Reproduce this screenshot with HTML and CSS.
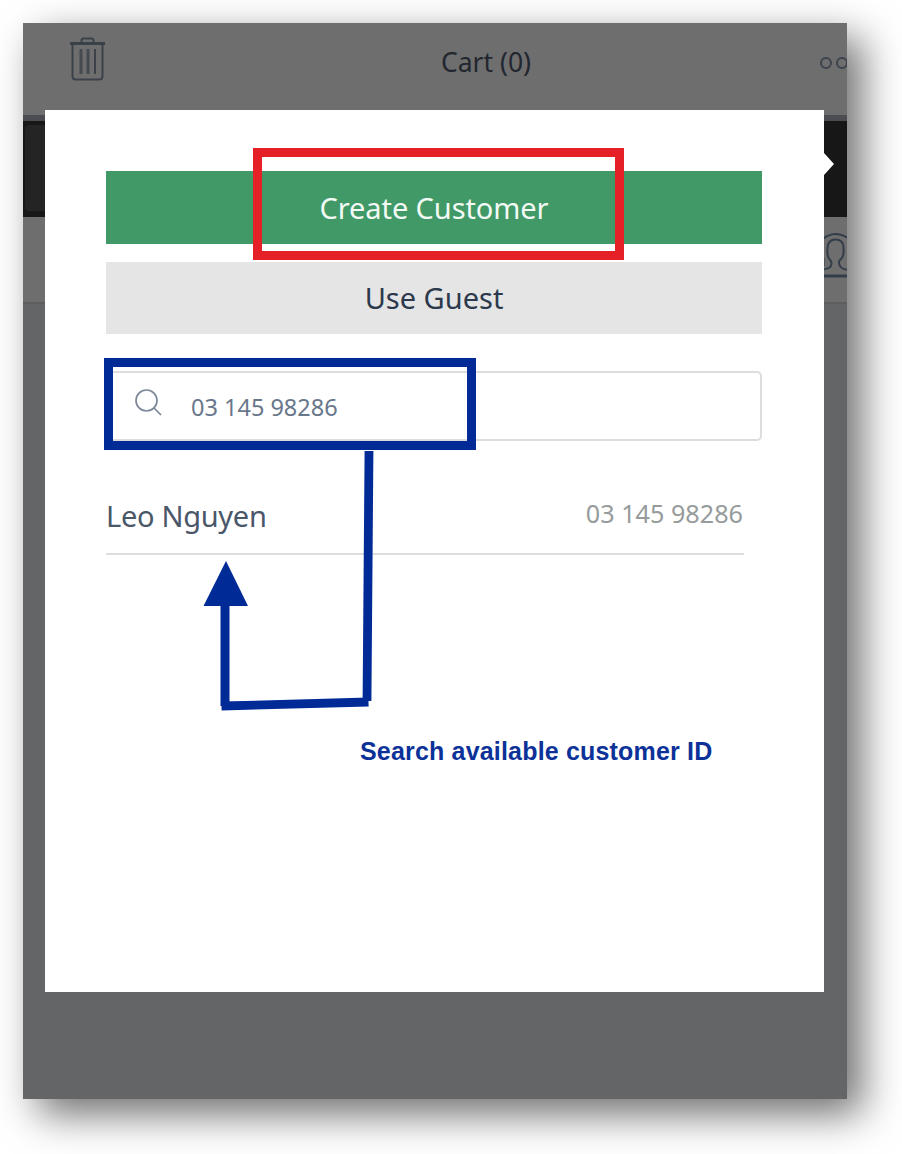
FILE: index.html
```html
<!DOCTYPE html>
<html lang="en">
<head>
<meta charset="utf-8">
<title>Cart</title>
<link rel="stylesheet" href="styles.css">
</head>
<body>
<main class="screen">
  <header class="topbar">
    <svg class="trash" width="38" height="46" viewBox="0 0 38 46" fill="none" stroke="#3b4149" stroke-width="2">
      <path d="M1 7.500H36" stroke-width="3"/>
      <path d="M3.500 8V40Q3.500 43.500 6.500 43.500H30Q33.500 43.500 33.500 40V8M12.500 7V4.500Q12.500 2.500 14.500 2.500H22.500Q24.500 2.500 24.500 4.500V7"/>
      <path d="M12 13V38M19 13V38" stroke-width="3" opacity=".8"/><path d="M26 13V38"/>
    </svg>
    <h1 class="title">Cart (0)</h1>
    <span class="more"><i class="dot"></i><i class="dot"></i></span>
  </header>
  <div class="band"><div class="band-button"></div></div>
  <div class="account">
    <svg width="25" height="50" viewBox="0 0 25 50" fill="none" stroke="#343d4a" stroke-width="2">
      <path d="M0 6.500Q14-4.500 28 6.500M0 36.500Q9 36 9.500 31Q9.500 28 7 25.500Q5 23 5.500 15Q6 6.500 13.500 6.500Q21.500 6.500 21.500 15Q22 23 19.500 25.500Q17 27 17 30Q17.500 36 26 37M1.500 25V33"/>
      <path d="M0 43H25" stroke-width="3"/>
    </svg>
  </div>

  <section class="dialog">
    <button class="btn create"><span class="label-create">Create Customer</span></button>
    <button class="btn guest"><span class="label-guest">Use Guest</span></button>
    <div class="search">
      <svg width="30" height="30" viewBox="0 0 30 30" fill="none" stroke="#7b8798" stroke-width="1.700">
        <circle cx="12.500" cy="12.500" r="10.500"/><path d="M20 20L27 27"/>
      </svg>
      <span class="query">03 145 98286</span>
    </div>
    <div class="result">
      <span class="name">Leo Nguyen</span>
      <span class="phone">03 145 98286</span>
    </div>
    <p class="note">Search available customer ID</p>
    <i class="pointer"></i>
    <i class="mark mark-create"></i>
    <i class="mark mark-search"></i>
    <svg class="arrow" width="180" height="270" viewBox="0 0 180 270">
      <path d="M171 3L169 253" stroke="#002b96" stroke-width="8.800"/>
      <path d="M23.500 258L170.500 254" stroke="#002b96" stroke-width="8.800"/>
      <path d="M27 258V150" stroke="#002b96" stroke-width="9"/>
      <path d="M28 113L50 158H5.500Z" fill="#002b96"/>
    </svg>
  </section>
</main>
</body>
</html>
```
FILE: styles.css
```css
* { box-sizing: border-box; }
body {
  margin: 0;
  padding: 23px;
  width: 902px;
  height: 1154px;
  overflow: hidden;
  background: #fff;
  font-family: "Noto Sans", sans-serif;
}
.screen {
  position: relative;
  width: 824px;
  height: 1076px;
  background: #646567;
  box-shadow: 15px 15px 38px rgba(0, 0, 0, .57);
}
.topbar {
  display: grid;
  grid-template-columns: 1fr auto 1fr;
  height: 98px;
  padding-left: 46px;
  background: #6e6e6e;
  border-bottom: 6px solid #4b4d52;
  overflow: hidden;
}
.trash { margin-top: 13px; }
.title {
  margin: 21px 0 0 56px;
  color: #22262e;
  font-size: 26.500px;
  font-weight: 400;
  line-height: 36px;
}
.more {
  display: flex;
  justify-content: flex-end;
  gap: 4px;
  margin: 34px -1px 0 0;
}
.dot {
  width: 12px;
  height: 12px;
  border: 2px solid #3c434d;
  border-radius: 50%;
}
.band {
  height: 96px;
  padding: 4px 2px 6px;
  background: #171717;
}
.band-button {
  width: 40px;
  height: 86px;
  background: #242424;
  border-radius: 4px;
}
.account {
  display: flex;
  justify-content: flex-end;
  height: 87px;
  padding-top: 16px;
  background: #6e6e6e;
  border-bottom: 2px solid #5c5e60;
}
.dialog {
  position: absolute;
  left: 22px;
  top: 87px;
  display: flex;
  flex-direction: column;
  width: 779px;
  height: 882px;
  padding: 61px 62px 0 61px;
  background: #fff;
}
.btn {
  display: flex;
  justify-content: center;
  align-items: center;
  width: 656px;
  height: 73px;
  padding: 0;
  border: 0;
  font: 29px/40px "Noto Sans", sans-serif;
  white-space: nowrap;
}
.create { background: #409966; color: #f3faf6; }
.label-create { letter-spacing: -.1px; }
.guest { margin-top: 18px; height: 72px; background: #e5e5e5; color: #2c394c; }
.search {
  display: flex;
  width: 656px;
  height: 70px;
  margin-top: 37px;
  padding: 15px 0 0 26px;
  border: 2px solid #ddd;
  border-radius: 5px;
}
.query {
  margin: 2px 0 0 27px;
  color: #69778b;
  font-size: 23.500px;
  line-height: 34px;
}
.result {
  display: flex;
  justify-content: space-between;
  width: 638px;
  height: 114px;
  padding-top: 55px;
  border-bottom: 2px solid #ddd;
}
.name { color: #4a5769; font-size: 29px; line-height: 40px; letter-spacing: -.3px; }
.phone { margin: -1px 1px 0 0; color: #969b9b; font-size: 25.200px; line-height: 36px; }
.note {
  margin: 181px 0 0 254px;
  color: #0c3299;
  font: bold 25px/30px "Liberation Sans", sans-serif;
  letter-spacing: .18px;
  white-space: nowrap;
}
.pointer {
  position: absolute;
  left: 779px;
  top: 43px;
  border: 11px solid transparent;
  border-left: 10px solid #fff;
  border-right: 0;
}
.mark { position: absolute; }
.mark-create {
  left: 208px;
  top: 38px;
  width: 371px;
  height: 112px;
  border: 9px solid #e62027;
}
.mark-search {
  left: 59px;
  top: 248px;
  width: 372px;
  height: 92px;
  border: 9px solid #002b96;
}
.arrow { position: absolute; left: 153px; top: 338px; }
```
